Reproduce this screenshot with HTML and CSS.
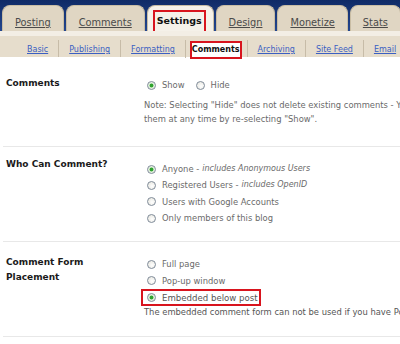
FILE: index.html
```html
<!DOCTYPE html>
<html lang="en">
<head>
  <meta charset="UTF-8" />
  <title>Settings | Comments</title>
  <link rel="stylesheet" href="styles.css">
</head>
<body>
  <div class="top">
    <nav class="tabs">
      <a class="tab">Posting</a>
      <a class="tab">Comments</a>
      <a class="tab active"><span class="mark">Settings</span></a>
      <a class="tab">Design</a>
      <a class="tab">Monetize</a>
      <a class="tab">Stats</a>
    </nav>
  </div>
  <div class="band"></div>
  <nav class="subtabs">
    <a class="sub first">Basic</a>
    <a class="sub">Publishing</a>
    <a class="sub">Formatting</a>
    <a class="sub active"><span class="mark">Comments</span></a>
    <a class="sub">Archiving</a>
    <a class="sub">Site Feed</a>
    <a class="sub">Email</a>
  </nav>

  <div class="settings">
    <div class="row row-show">
      <div class="label">Comments</div>
      <div class="opts">
        <div class="line">
          <span class="opt"><span class="radio on"></span>Show</span>
          <span class="opt"><span class="radio"></span>Hide</span>
        </div>
        <p class="note">Note: Selecting "Hide" does not delete existing comments - You can show<br>them at any time by re-selecting "Show".</p>
      </div>
    </div>

    <div class="row row-who">
      <div class="label">Who Can Comment?</div>
      <div class="opts">
        <div class="line"><span class="opt"><span class="radio on"></span>Anyone - <em>includes Anonymous Users</em></span></div>
        <div class="line"><span class="opt"><span class="radio"></span>Registered Users - <em>includes OpenID</em></span></div>
        <div class="line"><span class="opt"><span class="radio"></span>Users with Google Accounts</span></div>
        <div class="line"><span class="opt"><span class="radio"></span>Only members of this blog</span></div>
      </div>
    </div>

    <div class="row row-form">
      <div class="label">Comment Form<br>Placement</div>
      <div class="opts">
        <div class="line"><span class="opt"><span class="radio"></span>Full page</span></div>
        <div class="line"><span class="opt"><span class="radio"></span>Pop-up window</span></div>
        <div class="line"><span class="opt boxed"><span class="radio on"></span>Embedded below post</span></div>
        <p class="note">The embedded comment form can not be used if you have Post Pages disabled.</p>
      </div>
    </div>
  </div>
</body>
</html>
```

FILE: styles.css
```css
body {
  margin: 0;
  width: 400px;
  height: 344px;
  overflow: hidden;
  background: #fff;
  font-family: "DejaVu Sans", Verdana, sans-serif;
}
.top {
  height: 31px;
  background: linear-gradient(#0f2a66, #24478f);
}
.tabs {
  display: flex;
  gap: 2px;
  padding: 5px 0 0 2px;
  white-space: nowrap;
}
.tab {
  flex-shrink: 0;
  height: 26px;
  box-sizing: border-box;
  padding: 10px 12px 0;
  border-radius: 8px 8px 0 0;
  background: #e0d6c3;
  border: 1px solid #c9bda4;
  border-bottom: none;
  font-size: 9.8px;
  line-height: 14px;
  color: #4a4a4a;
  text-decoration: underline;
}
.tab.active {
  background: #f5f1e9;
  padding: 4px 7px 0 5px;
  color: #111;
  text-decoration: none;
  font-weight: bold;
  font-size: 9.5px;
}
.tab.active .mark {
  display: block;
  height: 21px;
  box-sizing: border-box;
  padding: 0 2px;
  line-height: 17px;
  border: 2px solid #d8141e;
  border-bottom: none;
}
.band {
  height: 5px;
  background: #f3eee5;
}
.subtabs {
  display: flex;
  height: 21px;
  box-sizing: border-box;
  padding: 4px 0 0 17px;
  background: #e6ddcc;
  white-space: nowrap;
}
.sub {
  flex-shrink: 0;
  padding: 0 10px;
  height: 17px;
  line-height: 19px;
  border-left: 1px solid #c7bca8;
  font-size: 8px;
  color: #3b5fc2;
  text-decoration: underline;
}
.sub.first {
  border-left: none;
}
.sub.active {
  padding: 1px 5px 0 4px;
  color: #111;
  text-decoration: none;
  font-weight: bold;
}
.sub.active .mark {
  display: block;
  height: 18px;
  box-sizing: border-box;
  padding: 0;
  line-height: 14px;
  background: #fff;
  border: 2px solid #d8141e;
}
.settings {
  width: 520px;
}
.row {
  display: flex;
  margin-left: 3px;
  border-bottom: 1px solid #e8e8e8;
}
.label {
  width: 138px;
  padding-left: 3px;
  font-size: 9px;
  font-weight: bold;
  line-height: 15px;
  color: #1a1a1a;
}
.opts {
  flex: 1;
  font-size: 8.4px;
  line-height: 16px;
  color: #6a6a6a;
}
.line {
  display: flex;
  gap: 8px;
  height: 16px;
}
.opt {
  display: inline-flex;
  align-items: center;
  white-space: nowrap;
}
.opt em {
  margin-left: 3px;
  font-size: 8px;
}
.radio {
  width: 9px;
  height: 9px;
  box-sizing: border-box;
  margin: 0 6px 0 3px;
  border: 1px solid #7f8b99;
  border-radius: 50%;
  background: radial-gradient(circle at 60% 60%, #ffffff, #e3e2da);
}
.radio.on {
  background: radial-gradient(circle, #2fa22f 0 1.6px, #c9e8c4 2.2px, #f4f4ee 3.5px);
}
.note {
  margin: 0;
  line-height: 14px;
  white-space: nowrap;
}
.row-show {
  padding: 17px 0 20px;
}
.row-show .label {
  padding-top: 2px;
}
.row-show .opts {
  padding-top: 3px;
}
.row-show .note {
  margin-top: 5px;
}
.row-who {
  padding: 8px 0 15px;
}
.row-who .label {
  padding-top: 2px;
}
.row-who .opts {
  padding-top: 6px;
}
.row-who .line {
  height: 16.3px;
}
.row-form {
  padding: 10px 0 17px;
}
.row-form .label {
  padding-top: 3px;
}
.row-form .opts {
  padding-top: 4px;
}
.row-form .line {
  height: 16.5px;
}
.opt.boxed {
  height: 17px;
  margin-left: -3px;
  padding: 0 1px 0 1px;
  border: 2px solid #d8141e;
  box-sizing: border-box;
  color: #555;
  font-size: 8.6px;
}
.row-form .note {
  margin-top: -1px;
  color: #555;
}
```
